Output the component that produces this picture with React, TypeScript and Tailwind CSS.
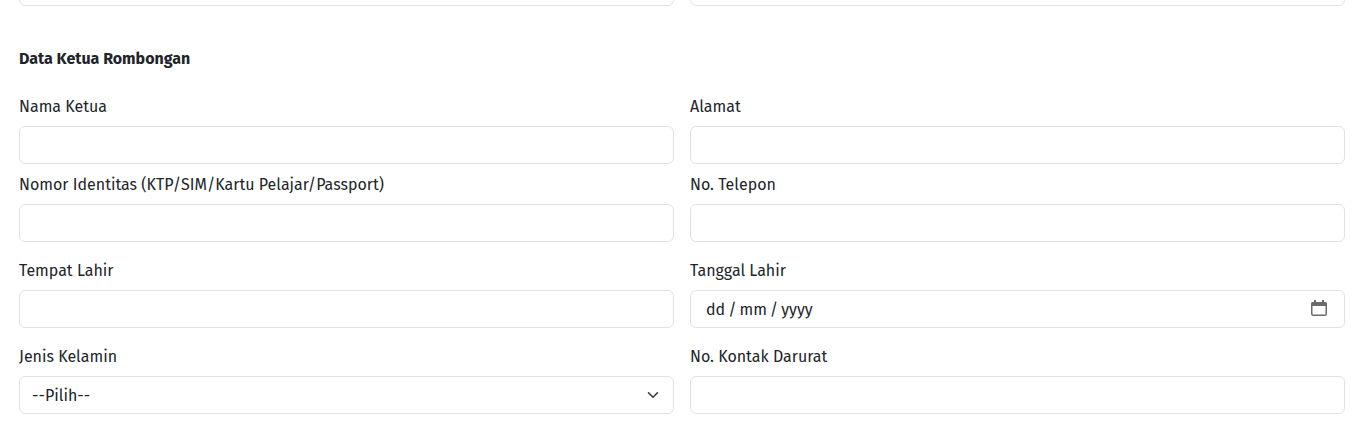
import type { ReactNode } from 'react';

const control = 'flex h-[38px] w-full items-center rounded-md border border-[#dee2e6] bg-white outline-none';

function Field({ label, children }: { label: string; children?: ReactNode }) {
  return (
    <div className="min-w-0">
      <div className="mb-2 h-6 whitespace-nowrap leading-[26px]">{label}</div>
      {children ?? <input aria-label={label} className={control} />}
    </div>
  );
}

function CalendarIcon() {
  return (
    <svg width="16" height="16" viewBox="0 0 16 16" className="mb-0.5 text-[#6b6b6d]" fill="none">
      <rect x="0.75" y="2.75" width="14.5" height="12.5" rx="1.5" stroke="currentColor" strokeWidth="1.5" />
      <path d="M0 4a2 2 0 0 1 2-2h1V0h2v2h6V0h2v2h1a2 2 0 0 1 2 2v2H0z" fill="currentColor" />
    </svg>
  );
}

export default function App() {
  return (
    <main className="h-[436px] overflow-hidden bg-white pr-[17px] pl-[19px] font-['Fira_Sans','Noto_Sans',sans-serif] text-base text-[#212529]">
      <div className="-mt-8 grid grid-cols-2 gap-x-4">
        <input aria-label="Field" className={control} />
        <input aria-label="Field" className={control} />
      </div>
      <h2 className="mt-10 mb-6 h-6 leading-[26px] font-bold">Data Ketua Rombongan</h2>
      <div className="grid grid-cols-2 gap-x-4 gap-y-2">
        <Field label="Nama Ketua" />
        <Field label="Alamat" />
        <Field label="Nomor Identitas (KTP/SIM/Kartu Pelajar/Passport)" />
        <Field label="No. Telepon" />
      </div>
      <div className="mt-4 grid grid-cols-2 gap-4">
        <Field label="Tempat Lahir" />
        <Field label="Tanggal Lahir">
          <div className={`${control} justify-between pr-[17px] pl-[15px]`}>
            <span className="pt-0.5 [word-spacing:-1.25px]">dd / mm / yyyy</span>
            <CalendarIcon />
          </div>
        </Field>
        <Field label="Jenis Kelamin">
          <div className={`${control} justify-between px-3`}>
            <span className="pt-0.5">--Pilih--</span>
            <svg width="16" height="12" viewBox="0 0 16 16" fill="none" stroke="#343a40" strokeWidth="2.1" strokeLinecap="round" strokeLinejoin="round">
              <path d="m2 5 6 6 6-6" />
            </svg>
          </div>
        </Field>
        <Field label="No. Kontak Darurat" />
      </div>
    </main>
  );
}
